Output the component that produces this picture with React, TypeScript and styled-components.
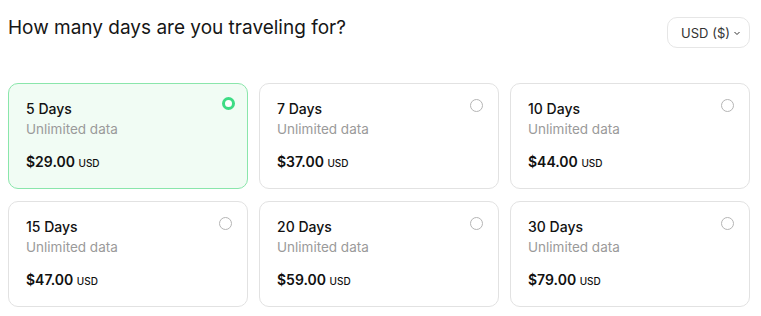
import styled, { createGlobalStyle } from "styled-components";

const plans = [
  { days: 5, price: "29.00" },
  { days: 7, price: "37.00" },
  { days: 10, price: "44.00" },
  { days: 15, price: "47.00" },
  { days: 20, price: "59.00" },
  { days: 30, price: "79.00" },
];

const GlobalStyle = createGlobalStyle`
  body {
    margin: 0;
    background: #fff;
    font-family: Inter, "Noto Sans", sans-serif;
    color: #111;
  }
`;

export default function App() {
  const selected = 5;
  return (
    <>
      <GlobalStyle />
      <Page>
        <Header>
          <Heading>How many days are you traveling for?</Heading>
          <CurrencyButton>
            USD ($)
            <svg width="8" height="8" viewBox="0 0 8 8">
              <path d="M1.5 3l2.5 2.5L6.5 3" fill="none" stroke="#333" strokeWidth="1" />
            </svg>
          </CurrencyButton>
        </Header>
        <Grid>
          {plans.map((plan) => {
            const active = plan.days === selected;
            return (
              <Card key={plan.days} $active={active}>
                <Radio $active={active} />
                <Days>{plan.days} Days</Days>
                <Data>Unlimited data</Data>
                <Price>
                  ${plan.price} <Currency>USD</Currency>
                </Price>
              </Card>
            );
          })}
        </Grid>
      </Page>
    </>
  );
}

const Page = styled.main`
  padding: 16px 11px 0 8px;
`;

const Header = styled.div`
  display: flex;
  justify-content: space-between;
  align-items: flex-start;
  height: 67px;
`;

const Heading = styled.h1`
  margin: 0;
  font-size: 19px;
  font-weight: 400;
  line-height: 24px;
  color: #161616;
`;

const CurrencyButton = styled.button`
  display: flex;
  align-items: center;
  gap: 3px;
  height: 31px;
  padding: 0 8px 0 13px;
  margin-top: 1px;
  border: 1px solid #e6e6e6;
  border-radius: 10px;
  background: #fff;
  font-family: inherit;
  font-size: 13px;
  color: #333;
`;

const Grid = styled.div`
  display: grid;
  grid-template-columns: repeat(3, 1fr);
  column-gap: 11px;
  row-gap: 12px;
`;

const Card = styled.div<{ $active: boolean }>`
  position: relative;
  height: 106px;
  box-sizing: border-box;
  padding: 15px 17px 16px;
  border: 1px solid ${({ $active }) => ($active ? "#8ae6ab" : "#e2e2e2")};
  border-radius: 10px;
  background: ${({ $active }) => ($active ? "#f1fcf4" : "#fff")};
`;

const Radio = styled.span<{ $active: boolean }>`
  position: absolute;
  top: ${({ $active }) => ($active ? "13px" : "15px")};
  right: ${({ $active }) => ($active ? "12px" : "15px")};
  width: 13px;
  height: 13px;
  box-sizing: border-box;
  border-radius: 50%;
  border: ${({ $active }) => ($active ? "3.5px solid #3ddc84" : "1px solid #b5b5b5")};
  background: #fff;
`;

const Days = styled.div`
  font-size: 14px;
  font-weight: 500;
  line-height: 20px;
  color: #111;
`;

const Data = styled.div`
  font-size: 13.5px;
  line-height: 20px;
  color: #9a9a9a;
`;

const Price = styled.div`
  margin-top: 13px;
  font-size: 14px;
  font-weight: 600;
  line-height: 20px;
  color: #111;
`;

const Currency = styled.span`
  font-size: 10px;
  font-weight: 500;
`;
